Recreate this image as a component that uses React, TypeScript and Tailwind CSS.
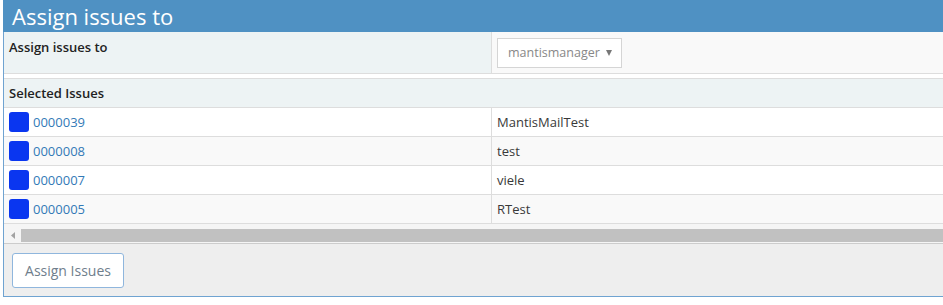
import React from "react";

const issues = [
  { id: "0000039", summary: "MantisMailTest" },
  { id: "0000008", summary: "test" },
  { id: "0000007", summary: "viele" },
  { id: "0000005", summary: "RTest" },
];

export default function App() {
  return (
    <div className="w-[943px] h-[305px] bg-white" style={{ fontFamily: '"Open Sans", sans-serif' }}>
      <div className="ml-[3px] border-l border-b border-[#6fa3d1] flex flex-col">
        <div className="h-[32px] bg-[#4f91c3] flex items-center pl-[9px] -ml-px">
          <span className="text-white text-[22px] leading-none">Assign issues to</span>
        </div>
        <div className="flex h-[42px] border-b border-[#dddddd]">
          <div className="w-[488px] bg-[#edf3f4] border-r border-[#dddddd] pl-[5px] pt-[6px] text-[13px] font-semibold text-[#222]">
            Assign issues to
          </div>
          <div className="flex-1 bg-[#f9f9f9] pl-[5px] pt-[6px]">
            <div className="w-[125px] h-[30px] border border-[#d5d5d5] bg-white flex items-center justify-between pl-[10px] pr-[9px]">
              <span className="text-[12.5px] text-[#888]">mantismanager</span>
              <svg width="6" height="6" viewBox="0 0 6 6"><path d="M0 0 L6 0 L3 6 Z" fill="#777" /></svg>
            </div>
          </div>
        </div>
        <div className="h-[5px] bg-white border-b border-[#dddddd]" />
        <div className="h-[29px] bg-[#edf3f4] border-b border-[#dddddd] flex items-center pl-[5px] pt-[2px] text-[13px] font-semibold text-[#222]">
          Selected Issues
        </div>
        {issues.map((it, i) => (
          <div
            key={it.id}
            className={`flex h-[29px] border-b border-[#dddddd] ${i % 2 === 0 ? "bg-white" : "bg-[#f9f9f9]"}`}
          >
            <div className="w-[488px] border-r border-[#dddddd] flex items-center pl-[5px]">
              <span className="w-[20px] h-[20px] rounded-[3px] bg-[#0a36f0] mr-[4px]" />
              <span className="text-[13px] text-[#337ab7] pt-[2px]">{it.id}</span>
            </div>
            <div className="flex-1 flex items-center pl-[5px] pt-[2px] text-[13px] text-[#393939]">{it.summary}</div>
          </div>
        ))}
        <div className="h-[5px] bg-[#f5f5f5]" />
        <div className="h-[13px] bg-[#f5f5f5] flex items-center">
          <div className="w-[17px] flex items-center justify-center">
            <svg width="4" height="7" viewBox="0 0 4 7"><path d="M4 0 L0 3.5 L4 7 Z" fill="#a3a3a3" /></svg>
          </div>
          <div className="flex-1 h-[13px] bg-[#c1c1c1]" />
        </div>
        <div className="h-[2px] bg-[#f5f5f5] border-b border-[#cccccc]" />
        <div className="h-[52px] bg-[#eeeeee] flex items-center pl-[8px]">
          <button className="w-[112px] h-[35px] border border-[#8fb6dd] rounded-[3px] bg-white text-[14px] text-[#6f7e8c]">
            Assign Issues
          </button>
        </div>
      </div>
    </div>
  );
}
